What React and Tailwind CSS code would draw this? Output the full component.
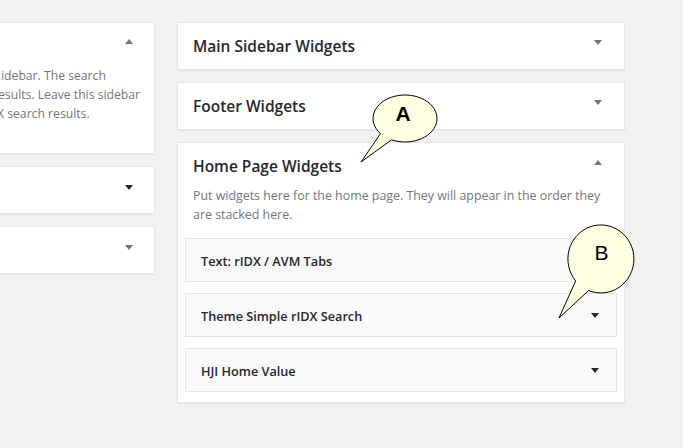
import React from "react";

const font = { fontFamily: '"Open Sans", "Noto Sans", sans-serif' };

function Caret({ up = false, dark = false, className = "" }) {
  return (
    <svg width="8" height="5" viewBox="0 0 8 5" className={className}>
      <polygon
        points={up ? "0,5 8,5 4,0" : "0,0 8,0 4,5"}
        fill={dark ? "#23282d" : "#72777c"}
      />
    </svg>
  );
}

function SidebarCard({ title, children, open = false }) {
  return (
    <div className="bg-white border border-[#e5e5e5] shadow-[0_1px_1px_rgba(0,0,0,0.04)]">
      <div className="flex justify-between h-[46px] pl-[15px] pr-[22px]">
        <h3 className="self-center mt-[2px] text-[15.5px] font-semibold text-[#23282d]">{title}</h3>
        <Caret up={open} className="mt-[17px]" />
      </div>
      {children}
    </div>
  );
}

function Widget({ title }) {
  return (
    <div className="flex justify-between h-[44px] bg-[#f9f9f9] border border-[#e5e5e5] pl-[15px] pr-[17px]">
      <span className="self-center mt-[3px] text-[12.7px] font-semibold text-[#23282d]">{title}</span>
      <Caret dark className="mt-[19px]" />
    </div>
  );
}

export default function App() {
  return (
    <div
      className="relative w-[683px] h-[448px] overflow-hidden bg-[#f1f1f1] flex gap-[22px] pt-[22px]"
      style={font}
    >
      {/* left column, cut by the window edge */}
      <div className="w-[155px] flex flex-col gap-[12px]">
        <div className="h-[132px] bg-white border border-l-0 border-[#e5e5e5] shadow-[0_1px_1px_rgba(0,0,0,0.04)] overflow-hidden">
          <div className="flex justify-end h-[46px] pr-[21px]">
            <Caret up className="mt-[16px]" />
          </div>
          <div className="-mt-[3px] text-[12.2px] leading-[19px] text-[#72777c] whitespace-nowrap">
            <div className="ml-[1px]">idebar. The search</div>
            <div className="-ml-[2px]">esults. Leave this sidebar</div>
            <div className="-ml-[3px]">X search results.</div>
          </div>
        </div>
        <div className="h-[48px] bg-white border border-l-0 border-[#e5e5e5] flex justify-end pr-[21px] shadow-[0_1px_1px_rgba(0,0,0,0.04)]">
          <Caret dark className="mt-[18px]" />
        </div>
        <div className="h-[48px] bg-white border border-l-0 border-[#e5e5e5] flex justify-end pr-[21px] shadow-[0_1px_1px_rgba(0,0,0,0.04)]">
          <Caret className="mt-[18px]" />
        </div>
      </div>

      {/* right column */}
      <div className="w-[448px] flex flex-col gap-[12px]">
        <SidebarCard title="Main Sidebar Widgets" />
        <SidebarCard title="Footer Widgets" />
        <SidebarCard title="Home Page Widgets" open>
          <p className="-mt-[3px] px-[15px] pb-[14px] text-[12.4px] leading-[19px] text-[#72777c]">
            Put widgets here for the home page. They will appear in the order they are stacked here.
          </p>
          <div className="flex flex-col gap-[11px] px-[7px] pb-[10px]">
            <Widget title="Text: rIDX / AVM Tabs" />
            <Widget title="Theme Simple rIDX Search" />
            <Widget title="HJI Home Value" />
          </div>
        </SidebarCard>
      </div>

      {/* callouts */}
      <svg className="absolute left-0 top-0" width="683" height="448" viewBox="0 0 683 448">
        <path
          d="M 380.5 133.6 L 361 162 L 391.5 139.8 A 32 23.5 0 1 0 380.5 133.6 Z"
          fill="#ffffe1"
          stroke="#000"
          strokeWidth="1"
        />
        <text x="403" y="121" textAnchor="middle" fontFamily="Liberation Sans, Arial, sans-serif" fontWeight="bold" fontSize="21" fill="#000">
          A
        </text>
        <path
          d="M 575.7 280.9 L 559 318 L 588.6 290.5 A 33 34 0 1 0 575.7 280.9 Z"
          fill="#ffffe1"
          stroke="#000"
          strokeWidth="1"
        />
        <text x="601.5" y="260" textAnchor="middle" fontFamily="Liberation Sans, Arial, sans-serif" fontSize="21" fill="#000">
          B
        </text>
      </svg>
    </div>
  );
}
